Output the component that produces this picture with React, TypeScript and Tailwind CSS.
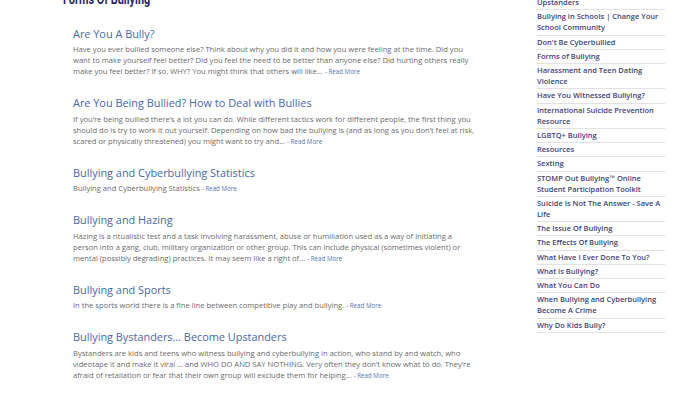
import React from "react";

const articles = [
  {
    title: "Are You A Bully?",
    lines: [
      "Have you ever bullied someone else? Think about why you did it and how you were feeling at the time. Did you",
      "want to make yourself feel better? Did you feel the need to be better than anyone else? Did hurting others really",
      "make you feel better? If so, WHY? You might think that others will like...",
    ],
  },
  {
    title: "Are You Being Bullied? How to Deal with Bullies",
    lines: [
      "If you’re being bullied there’s a lot you can do. While different tactics work for different people, the first thing you",
      "should do is try to work it out yourself. Depending on how bad the bullying is (and as long as you don’t feel at risk,",
      "scared or physically threatened) you might want to try and...",
    ],
  },
  {
    title: "Bullying and Cyberbullying Statistics",
    lines: ["Bullying and Cyberbullying Statistics"],
  },
  {
    title: "Bullying and Hazing",
    lines: [
      "Hazing is a ritualistic test and a task involving harassment, abuse or humiliation used as a way of initiating a",
      "person into a gang, club, military organization or other group. This can include physical (sometimes violent) or",
      "mental (possibly degrading) practices. It may seem like a right of...",
    ],
  },
  {
    title: "Bullying and Sports",
    lines: ["In the sports world there is a fine line between competitive play and bullying."],
  },
  {
    title: "Bullying Bystanders… Become Upstanders",
    lines: [
      "Bystanders are kids and teens who witness bullying and cyberbullying in action, who stand by and watch, who",
      "videotape it and make it viral … and WHO DO AND SAY NOTHING. Very often they don’t know what to do. They’re",
      "afraid of retaliation or fear that their own group will exclude them for helping...",
    ],
  },
];

const links = [
  "Upstanders",
  "Bullying in Schools | Change Your School Community",
  "Don't Be Cyberbullied",
  "Forms of Bullying",
  "Harassment and Teen Dating Violence",
  "Have You Witnessed Bullying?",
  "International Suicide Prevention Resource",
  "LGBTQ+ Bullying",
  "Resources",
  "Sexting",
  "STOMP Out Bullying™ Online Student Participation Toolkit",
  "Suicide Is Not The Answer - Save A Life",
  "The Issue Of Bullying",
  "The Effects Of Bullying",
  "What Have I Ever Done To You?",
  "What is Bullying?",
  "What You Can Do",
  "When Bullying and Cyberbullying Become A Crime",
  "Why Do Kids Bully?",
];

export default function App() {
  return (
    <div className="w-[700px] h-[394px] overflow-hidden bg-white flex" style={{ fontFamily: '"Open Sans", "Liberation Sans", sans-serif' }}>
      <div className="w-[537px] pl-[63px] shrink-0">
        <h1
          className="mt-[-9px] text-[14.5px] leading-[18px] font-bold text-[#27276b] origin-left scale-x-[0.75] whitespace-nowrap"
          style={{ fontFamily: 'Roboto, "Liberation Sans", sans-serif' }}
        >
          Forms Of Bullying
        </h1>
        <div className="pl-[10px] pt-[16.5px] flex flex-col gap-[18px] w-[440px]">
          {articles.map((a) => (
            <div key={a.title}>
              <div className="text-[10.9px] leading-[16px] text-[#4868a6]">{a.title}</div>
              <div className="mt-[2.5px] text-[7.6px] leading-[11px] text-[#6b6b6b]">
                {a.lines.map((line, i) => (
                  <div key={i} className="whitespace-nowrap h-[11px]">
                    {line}
                    {i === a.lines.length - 1 && (
                      <>
                        {" "}
                        <span className="text-[6.2px] leading-none text-[#5573b0]">- Read More</span>
                      </>
                    )}
                  </div>
                ))}
              </div>
            </div>
          ))}
        </div>
      </div>
      <div className="w-[128px] shrink-0 mt-[-4px]">
        {links.map((l) => (
          <div key={l} className="border-b border-[#e2e2e2] py-[1.125px] text-[7.5px] leading-[11px] font-semibold text-[#3f3f78]">
            {l}
          </div>
        ))}
      </div>
    </div>
  );
}
